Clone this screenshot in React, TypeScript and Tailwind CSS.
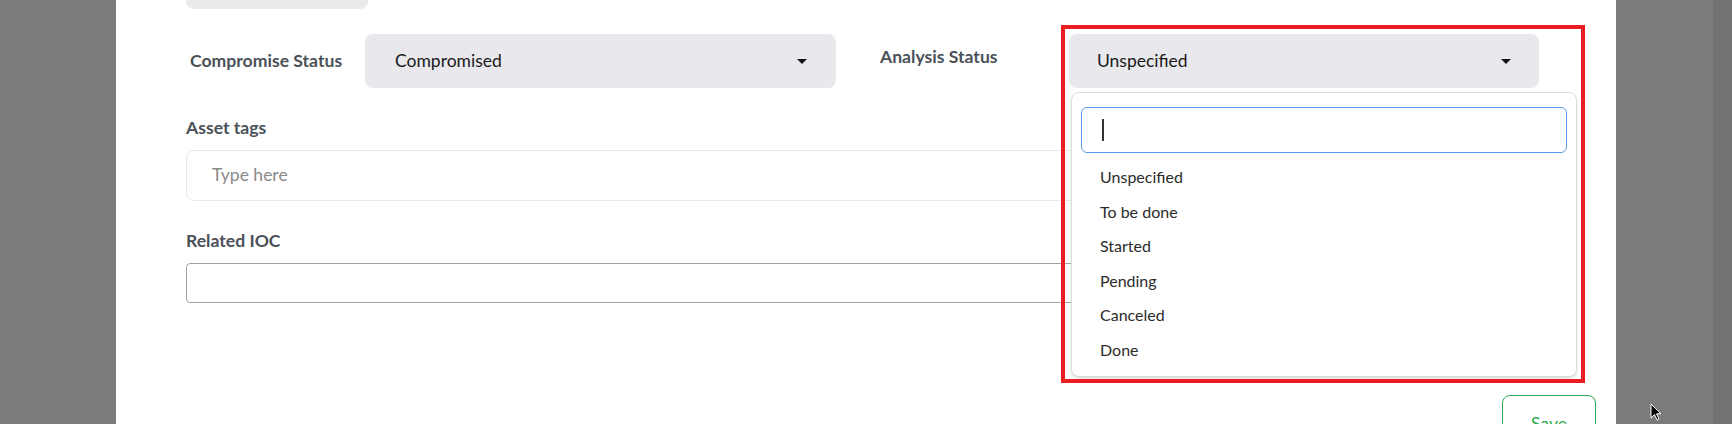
import React from 'react';

const statusOptions = ['Unspecified', 'To be done', 'Started', 'Pending', 'Canceled', 'Done'];

const Caret = () => (
  <svg width="10" height="5" viewBox="0 0 10 5" className="shrink-0">
    <path d="M0 0 L10 0 L5 5 Z" fill="#111" />
  </svg>
);

const App: React.FC = () => {
  return (
    <div className="relative flex h-[424px] w-[1732px] overflow-hidden bg-[#7b7b7c] font-['Lato',sans-serif]">
      <div className="ml-[116px] h-full w-[1500px] bg-white pl-[70px] pr-[20px]">
        {/* bit of the previous field, scrolled off the top */}
        <div className="h-[9px] w-[182px] rounded-b-lg bg-[#e9eaea]" />

        <div className="mt-[25px] flex h-[54px] items-center">
          <label className="w-[179px] pl-[4px] text-[17.6px] font-bold text-[#4a5158]">
            Compromise Status
          </label>
          <div className="flex h-[54px] w-[471px] items-center justify-between rounded-lg bg-[#e8e8ed] pl-[30px] pr-[29px]">
            <span className="text-[17.5px] text-[#1a1a1a]">Compromised</span>
            <Caret />
          </div>
          <label className="mb-[7px] ml-[44px] w-[189px] text-[17.6px] font-bold text-[#4a5158]">
            Analysis Status
          </label>
          <div className="relative">
            <div className="flex h-[54px] w-[470px] items-center justify-between rounded-lg bg-[#e8e8ed] pl-[28px] pr-[28px]">
              <span className="text-[17.5px] text-[#1a1a1a]">Unspecified</span>
              <Caret />
            </div>
            <div className="absolute left-[2px] top-[58px] z-10 w-[506px] rounded-lg border border-[#dcdcdc] bg-white px-[9px] pb-[9px] pt-[14px] shadow-[0_2px_3px_rgba(0,0,0,0.12)]">
              <div className="flex h-[46px] items-center rounded-md border border-[#5b9bef] pl-[20px]">
                <span className="h-[22px] w-[1.5px] bg-[#333]" />
              </div>
              <ul className="mt-[7px]">
                {statusOptions.map((opt) => (
                  <li
                    key={opt}
                    className="flex h-[34.5px] items-center pl-[19px] text-[16px] text-[#2b2b2b]"
                  >
                    {opt}
                  </li>
                ))}
              </ul>
            </div>
          </div>
        </div>

        <label className="mt-[30px] block text-[17.6px] font-bold leading-[20px] text-[#4a5158]">
          Asset tags
        </label>
        <div className="mt-[12px] flex h-[51px] w-[1353px] items-center rounded-lg border border-[#e8e9ee] pl-[25px]">
          <span className="text-[17.5px] text-[#8a8a8a]">Type here</span>
        </div>

        <label className="mt-[30px] block text-[17.6px] font-bold leading-[20px] text-[#4a5158]">
          Related IOC
        </label>
        <div className="mt-[12px] h-[40px] w-[1353px] rounded-[4px] border border-[#a3a3a3]" />

        <div className="mt-[92px] flex justify-end">
          <button className="h-[58px] w-[94px] rounded-lg border border-[#2fa84f] text-[17.5px] text-[#2fa84f]">
            Save
          </button>
        </div>
      </div>

      <div className="ml-auto h-full w-[19px] bg-[#737374]" />

      {/* highlight box around the open dropdown */}
      <div className="pointer-events-none absolute left-[1061px] top-[25px] z-20 h-[358px] w-[524px] border-4 border-[#ec1c24]" />

      {/* mouse pointer */}
      <svg
        className="absolute left-[1650px] top-[403px] z-30"
        width="12"
        height="18"
        viewBox="0 0 12 18"
      >
        <path d="M1 1 L1 15 L4.5 11.5 L7 17 L9 16 L6.5 10.8 L11 10.8 Z" fill="#000" stroke="#fff" strokeWidth="1" />
      </svg>
    </div>
  );
};

export default App;
